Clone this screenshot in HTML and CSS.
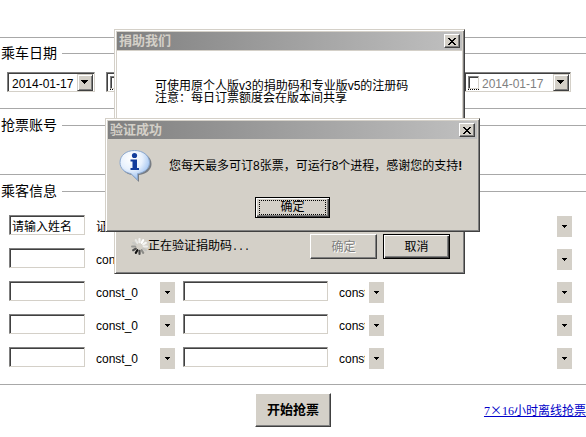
FILE: index.html
```html
<!DOCTYPE html>
<html lang="zh-CN">
<head>
<meta charset="utf-8">
<title>抢票</title>
<link rel="stylesheet" href="styles.css">
</head>
<body>
<main>
  <section class="group">
    <h2>乘车日期</h2>
    <div class="dates">
      <div class="picker"><input class="date" type="text" value="2014-01-17" aria-label="乘车日期"><button class="drop" type="button" aria-label="选择日期"></button></div>
      <div class="picker optional"><input class="tick" type="checkbox" aria-label="启用"><input class="date" type="text" value="2014-01-17" aria-label="乘车日期"><button class="drop" type="button" aria-label="选择日期"></button></div>
      <div class="picker optional last"><input class="tick" type="checkbox" aria-label="启用"><input class="date" type="text" value="2014-01-17" aria-label="乘车日期"><button class="drop" type="button" aria-label="选择日期"></button></div>
    </div>
  </section>
  <section class="group accounts">
    <h2>抢票账号</h2>
  </section>
  <section class="group passengers">
    <h2>乘客信息</h2>
    <div class="rows">
      <div class="row"><input class="field" type="text" value="请输入姓名" aria-label="姓名"><select aria-label="证件"><option>证件</option></select><input class="field" type="text" aria-label="号码"><select aria-label="票种"><option>const_0</option></select><select aria-label="席别"><option></option></select></div>
      <div class="row"><input class="field" type="text" aria-label="姓名"><select aria-label="证件"><option>const_0</option></select><input class="field" type="text" aria-label="号码"><select aria-label="票种"><option>const_0</option></select><select aria-label="席别"><option></option></select></div>
      <div class="row"><input class="field" type="text" aria-label="姓名"><select aria-label="证件"><option>const_0</option></select><input class="field" type="text" aria-label="号码"><select aria-label="票种"><option>const_0</option></select><select aria-label="席别"><option></option></select></div>
      <div class="row"><input class="field" type="text" aria-label="姓名"><select aria-label="证件"><option>const_0</option></select><input class="field" type="text" aria-label="号码"><select aria-label="票种"><option>const_0</option></select><select aria-label="席别"><option></option></select></div>
      <div class="row"><input class="field" type="text" aria-label="姓名"><select aria-label="证件"><option>const_0</option></select><input class="field" type="text" aria-label="号码"><select aria-label="票种"><option>const_0</option></select><select aria-label="席别"><option></option></select></div>
    </div>
  </section>
  <footer class="actions">
    <button class="start" type="button">开始抢票</button>
    <a href="#offline">7<span class="wide">×</span>16小时离线抢票</a>
  </footer>
</main>

<div class="dialog donate" role="dialog" aria-labelledby="donate-title">
  <header class="bar"><h3 id="donate-title">捐助我们</h3><button class="close" type="button" aria-label="关闭"><svg width="8" height="7" viewBox="0 0 8 7" shape-rendering="crispEdges"><path d="M0 0h2v1h1v1h2v-1h1v-1h2v1h-1v1h-1v1h-1v1h1v1h1v1h1v1h-2v-1h-1v-1h-2v1h-1v1h-2v-1h1v-1h1v-1h1v-1h-1v-1h-1v-1h-1z"/></svg></button></header>
  <p class="message">可使用原个人版v3的捐助码和专业版v5的注册码<br>注意：每日订票额度会在版本间共享</p>
  <div class="status">
    <svg class="spinner" width="17" height="17" viewBox="-8 -8 16 16" stroke-width="2" stroke-linecap="round">
      <path d="M0-4V-7" stroke="#f4f4f2"/>
      <path d="M2-3.5L3.5-6" stroke="#ffffff"/>
      <path d="M3.5-2L6-3.5" stroke="#f6f6f4"/>
      <path d="M4 0H7" stroke="#eeeeec"/>
      <path d="M3.5 2L6 3.5" stroke="#c4c4c0"/>
      <path d="M2 3.5L3.5 6" stroke="#8c8c88"/>
      <path d="M0 4V7" stroke="#484848"/>
      <path d="M-2 3.5L-3.5 6" stroke="#101010"/>
      <path d="M-3.5 2L-6 3.5" stroke="#505050"/>
      <path d="M-4 0H-7" stroke="#999996"/>
      <path d="M-3.5-2L-6-3.5" stroke="#c8c8c4"/>
      <path d="M-2-3.5L-3.5-6" stroke="#e8e8e6"/>
    </svg>
    <span class="progress">正在验证捐助码<span class="dots">...</span></span>
    <button class="btn" type="button" disabled>确定</button>
    <button class="btn default" type="button">取消</button>
  </div>
</div>

<div class="dialog verified" role="alertdialog" aria-labelledby="verified-title">
  <header class="bar"><h3 id="verified-title">验证成功</h3><button class="close" type="button" aria-label="关闭"><svg width="8" height="7" viewBox="0 0 8 7" shape-rendering="crispEdges"><path d="M0 0h2v1h1v1h2v-1h1v-1h2v1h-1v1h-1v1h-1v1h1v1h1v1h1v1h-2v-1h-1v-1h-2v1h-1v1h-2v-1h1v-1h1v-1h1v-1h-1v-1h-1v-1h-1z"/></svg></button></header>
  <div class="alert">
    <div class="notice">
      <svg width="34" height="34" viewBox="0 0 34 34">
        <defs><radialGradient id="bubble" cx="38%" cy="28%" r="75%"><stop offset="0" stop-color="#ffffff"/><stop offset=".5" stop-color="#e8f1fd"/><stop offset="1" stop-color="#91b9ee"/></radialGradient></defs>
        <path d="M17 3C8 3 2.500 8 2.500 15c0 6 4.500 10 10.500 11l7 7v-7C27 25 32.500 21 32.500 15 32.500 8 26 3 17 3z" fill="#59616d" opacity=".75"/>
        <path d="M15.500 1.500C7 1.500 1 6.500 1 13.500c0 6 4.500 10 11 11.200l6.500 6.300v-6.300C25.500 23.700 30.500 19.500 30.500 13.500c0-7-6.500-12-15-12z" fill="url(#bubble)" stroke="#8ba8cf"/>
        <circle cx="15.500" cy="6.500" r="2.600" fill="#123c9c"/>
        <path d="M11.500 10.500h6.500v8.500h2v2h-8.500v-2h2v-6.500h-2z" fill="#123c9c"/>
      </svg>
      <p>您每天最多可订8张票，可运行8个进程，感谢您的支持<b>!</b></p>
    </div>
    <button class="btn default focused" type="button"><span>确定</span></button>
  </div>
</div>
</body>
</html>
```
FILE: styles.css
```css
* { box-sizing: border-box; }

:root {
  --face: #d4d0c8;
  --shade: #808080;
  --dark: #404040;
  --rule: #a8a8a8;
}

body {
  margin: 0;
  padding-top: 37px;
  background: #fff;
  color: #000;
  font: 12px/14px "Liberation Sans", "Noto Sans CJK SC", sans-serif;
}

input, select, button {
  margin: 0;
  padding: 0;
  border: 0;
  border-radius: 0;
  font: inherit;
  color: inherit;
  appearance: none;
}

h2, h3, p { margin: 0; font: inherit; }

/* Grouped sections */
.group {
  border-top: 1px solid var(--rule);
  padding-top: 7px;
  padding-bottom: 16px;
}

.group h2 {
  display: flex;
  align-items: center;
  gap: 5px;
  padding-left: 1px;
  font-size: 14px;
  line-height: 17px;
}

.group h2::after {
  content: "";
  flex: 1;
  height: 1px;
  background: var(--rule);
}

.accounts { padding-top: 8px; padding-bottom: 40px; }
.passengers { padding-top: 8px; padding-bottom: 15px; }

/* Date pickers */
.dates {
  display: flex;
  gap: 11px;
  margin-top: 10px;
  padding: 0 15px 0 7px;
}

.picker {
  display: flex;
  align-items: center;
  width: 88px;
  height: 20px;
  padding: 2px 1px 1px 4px;
  border: 1px solid var(--shade);
  border-right-color: var(--face);
  border-bottom-color: var(--face);
  box-shadow: inset 1px 1px var(--dark);
}

.picker .date { flex: 1; min-width: 0; height: 16px; padding-top: 2px; background: none; }
.optional { width: 107px; padding-left: 3px; color: var(--shade); }
.last { margin-left: auto; }

.tick {
  height: 14px;
  width: 11px;
  margin-right: 3px;
  border-bottom: 1px dotted #000;
}

.tick::before {
  content: "";
  display: block;
  height: 11px;
  border: 1px solid var(--shade);
  border-right-color: var(--face);
  border-bottom-color: var(--face);
  box-shadow: inset 1px 1px var(--dark);
}

.tick:checked::before { background: var(--dark); }

.drop {
  width: 16px;
  height: 17px;
  border: 1px solid;
  border-color: var(--face) var(--dark) var(--dark) var(--face);
  box-shadow: inset 1px 1px #fff, inset -1px -1px var(--shade);
  background:
    linear-gradient(#000, #000) 3px 5px / 7px 1px no-repeat,
    linear-gradient(#000, #000) 4px 6px / 5px 1px no-repeat,
    linear-gradient(#000, #000) 5px 7px / 3px 1px no-repeat,
    linear-gradient(#000, #000) 6px 8px / 1px 1px no-repeat,
    var(--face);
}

/* Passenger rows */
.rows {
  display: grid;
  gap: 11px;
  margin-top: 15px;
  padding: 0 14px 0 9px;
}

.row {
  display: grid;
  grid-template-columns: 76px 82px 145px 48px 1fr;
  gap: 8px;
}

.field {
  width: 100%;
  height: 20px;
  padding: 1px 2px 0;
  border: 1px solid var(--shade);
  border-right-color: var(--face);
  border-bottom-color: var(--face);
  box-shadow: inset 1px 1px var(--dark);
  background: #fff;
}

select {
  width: 100%;
  height: 21px;
  margin-top: 1px;
  padding: 0 19px 0 3px;
  background:
    linear-gradient(#000, #000) right 5px top 9px / 5px 1px no-repeat,
    linear-gradient(#000, #000) right 6px top 10px / 3px 1px no-repeat,
    linear-gradient(#000, #000) right 7px top 11px / 1px 1px no-repeat,
    linear-gradient(var(--face), var(--face)) right / 15px 100% no-repeat;
}

/* Bottom actions */
.actions {
  display: grid;
  grid-template-columns: 1fr auto 1fr;
  align-items: center;
  padding-top: 8px;
  border-top: 1px solid var(--rule);
}

.start {
  grid-column: 2;
  width: 76px;
  height: 34px;
  border: 1px solid;
  border-color: #fff var(--dark) var(--dark) #fff;
  box-shadow: inset -1px -1px var(--shade);
  background: var(--face);
  font-size: 13px;
  font-weight: bold;
}

.actions a {
  justify-self: end;
  color: #0000c8;
  font-family: "Liberation Serif", "Noto Sans CJK SC", serif;
}

.wide { font-family: "Noto Sans CJK SC", sans-serif; }

/* Floating dialogs */
.dialog {
  position: absolute;
  padding: 2px;
  border: 1px solid;
  border-color: var(--face) var(--dark) var(--dark) var(--face);
  box-shadow: inset 1px 1px #fff, inset -1px -1px var(--shade);
  background: var(--face);
}

.donate { left: 114px; top: 29px; width: 351px; }
.verified { left: 105px; top: 118px; width: 375px; }

.bar {
  display: flex;
  align-items: center;
  justify-content: space-between;
  height: 18px;
  margin-bottom: 1px;
  padding: 0 2px;
  background: linear-gradient(90deg, #808080, #c0c0c0);
  color: var(--face);
}

.bar h3 { font-size: 13px; font-weight: bold; }

.close {
  display: grid;
  place-items: center;
  width: 16px;
  height: 14px;
  border: 1px solid;
  border-color: #fff var(--dark) var(--dark) #fff;
  box-shadow: inset -1px -1px var(--shade);
  background: var(--face);
}

.message {
  padding: 29px 38px 124px;
  background: #fff;
  line-height: 12px;
  white-space: nowrap;
}

.status {
  display: flex;
  align-items: center;
  gap: 6px;
  padding: 6px 12px 12px 14px;
}

.progress { flex: 1; margin-left: -6px; white-space: nowrap; }
.dots { font-family: "Liberation Mono", monospace; font-size: 10px; }

.btn {
  width: 67px;
  height: 25px;
  border: 1px solid;
  border-color: #fff var(--dark) var(--dark) #fff;
  box-shadow: inset -1px -1px var(--shade);
  background: var(--face);
}

.btn:disabled { color: var(--shade); text-shadow: 1px 1px #fff; }

.default {
  border-color: #000;
  box-shadow: inset 1px 1px #fff, inset -1px -1px var(--dark), inset -2px -2px var(--shade);
}

.alert {
  display: grid;
  justify-items: center;
  gap: 14px;
  padding: 9px 11px 11px;
}

.notice {
  display: flex;
  align-items: center;
  gap: 16px;
  justify-self: stretch;
  white-space: nowrap;
}

.focused { width: 75px; height: 21px; padding: 2px 3px; }
.focused span { display: block; border: 1px dotted #000; line-height: 13px; }
```
